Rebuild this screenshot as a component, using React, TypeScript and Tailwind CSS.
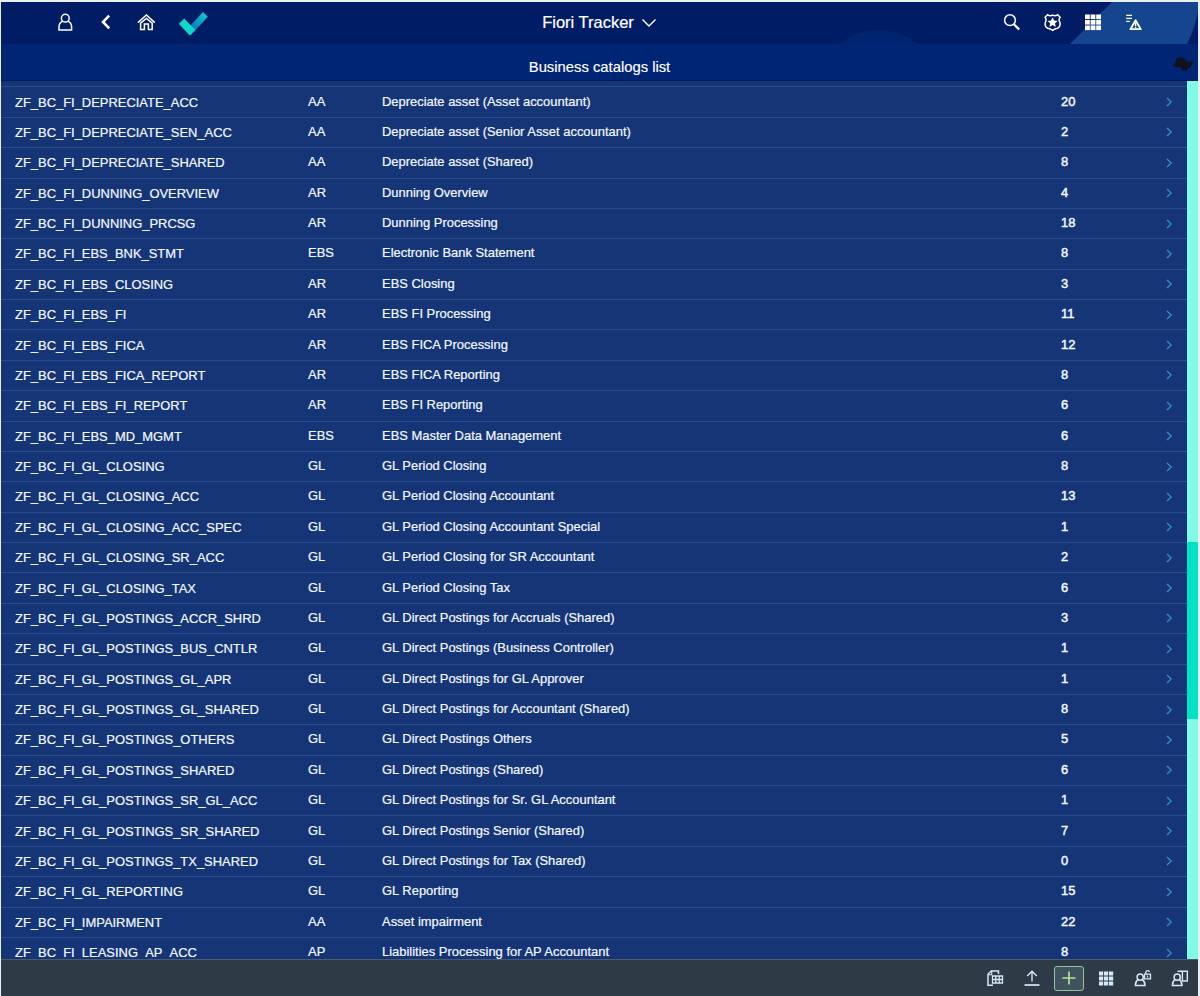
import type { ReactNode } from "react";

type Catalog = [name: string, area: string, description: string, apps: number];

const CATALOGS: Catalog[] = [
  ["ZF_BC_FI_DEPRECIATE_ACC", "AA", "Depreciate asset (Asset accountant)", 20],
  ["ZF_BC_FI_DEPRECIATE_SEN_ACC", "AA", "Depreciate asset (Senior Asset accountant)", 2],
  ["ZF_BC_FI_DEPRECIATE_SHARED", "AA", "Depreciate asset (Shared)", 8],
  ["ZF_BC_FI_DUNNING_OVERVIEW", "AR", "Dunning Overview", 4],
  ["ZF_BC_FI_DUNNING_PRCSG", "AR", "Dunning Processing", 18],
  ["ZF_BC_FI_EBS_BNK_STMT", "EBS", "Electronic Bank Statement", 8],
  ["ZF_BC_FI_EBS_CLOSING", "AR", "EBS Closing", 3],
  ["ZF_BC_FI_EBS_FI", "AR", "EBS FI Processing", 11],
  ["ZF_BC_FI_EBS_FICA", "AR", "EBS FICA Processing", 12],
  ["ZF_BC_FI_EBS_FICA_REPORT", "AR", "EBS FICA Reporting", 8],
  ["ZF_BC_FI_EBS_FI_REPORT", "AR", "EBS FI Reporting", 6],
  ["ZF_BC_FI_EBS_MD_MGMT", "EBS", "EBS Master Data Management", 6],
  ["ZF_BC_FI_GL_CLOSING", "GL", "GL Period Closing", 8],
  ["ZF_BC_FI_GL_CLOSING_ACC", "GL", "GL Period Closing Accountant", 13],
  ["ZF_BC_FI_GL_CLOSING_ACC_SPEC", "GL", "GL Period Closing Accountant Special", 1],
  ["ZF_BC_FI_GL_CLOSING_SR_ACC", "GL", "GL Period Closing for SR Accountant", 2],
  ["ZF_BC_FI_GL_CLOSING_TAX", "GL", "GL Period Closing Tax", 6],
  ["ZF_BC_FI_GL_POSTINGS_ACCR_SHRD", "GL", "GL Direct Postings for Accruals (Shared)", 3],
  ["ZF_BC_FI_GL_POSTINGS_BUS_CNTLR", "GL", "GL Direct Postings (Business Controller)", 1],
  ["ZF_BC_FI_GL_POSTINGS_GL_APR", "GL", "GL Direct Postings for GL Approver", 1],
  ["ZF_BC_FI_GL_POSTINGS_GL_SHARED", "GL", "GL Direct Postings for Accountant (Shared)", 8],
  ["ZF_BC_FI_GL_POSTINGS_OTHERS", "GL", "GL Direct Postings Others", 5],
  ["ZF_BC_FI_GL_POSTINGS_SHARED", "GL", "GL Direct Postings (Shared)", 6],
  ["ZF_BC_FI_GL_POSTINGS_SR_GL_ACC", "GL", "GL Direct Postings for Sr. GL Accountant", 1],
  ["ZF_BC_FI_GL_POSTINGS_SR_SHARED", "GL", "GL Direct Postings Senior (Shared)", 7],
  ["ZF_BC_FI_GL_POSTINGS_TX_SHARED", "GL", "GL Direct Postings for Tax (Shared)", 0],
  ["ZF_BC_FI_GL_REPORTING", "GL", "GL Reporting", 15],
  ["ZF_BC_FI_IMPAIRMENT", "AA", "Asset impairment", 22],
  ["ZF_BC_FI_LEASING_AP_ACC", "AP", "Liabilities Processing for AP Accountant", 8],
];

function Icon({ children, className = "w-5 h-5" }: { children: ReactNode; className?: string }) {
  return (
    <svg
      viewBox="0 0 20 20"
      className={`flex-none ${className}`}
      fill="none"
      stroke="currentColor"
      strokeWidth="1.5"
    >
      {children}
    </svg>
  );
}

function GridIcon() {
  return (
    <Icon>
      <g fill="currentColor" stroke="none">
        {[2.5, 8, 13.5].map((y) =>
          [2, 7.6, 13.2].map((x) => <rect key={`${x}-${y}`} x={x} y={y} width="4.8" height="4.6" />)
        )}
      </g>
    </Icon>
  );
}

function IconButton({ label, children }: { label: string; children: ReactNode }) {
  return (
    <button aria-label={label} className="flex-none flex items-center justify-center">
      {children}
    </button>
  );
}

function ShellHeader() {
  return (
    <header className="relative flex-none h-[42px] bg-[#001c64] text-white overflow-hidden">
      {/* Background artwork */}
      <svg viewBox="0 0 1197 42" className="absolute inset-0 w-full h-full">
        <path d="M838 42Q856 28 878 28Q900 28 917 42Z" fill="#00246f" />
        <path d="M1111 0H1197V10Q1193 29 1186 42H1069Z" fill="#14458e" />
      </svg>

      <div className="relative h-full grid grid-cols-3 items-center pb-0.5">
        <div className="flex items-center pl-[54px]">
          <IconButton label="User">
            <Icon>
              <circle cx="10.3" cy="6.2" r="3.9" />
              <path d="M7.6 9.2Q4 11 4 15V17.9H16.6V15Q16.6 11 13 9.2" />
            </Icon>
          </IconButton>
          <div className="ml-5">
            <IconButton label="Back">
              <Icon>
                <path d="M14.2 3.6L8 10L14.2 16.4" strokeWidth="2.6" />
              </Icon>
            </IconButton>
          </div>
          <div className="ml-[21px]">
            <IconButton label="Home">
              <Icon>
                <path d="M2 10.6L10.4 3L18.8 10.6" />
                <path d="M4.6 11.2L10.4 6.4L16.2 11.2V17.4H12.4V12H8.4V17.4H4.6Z" />
              </Icon>
            </IconButton>
          </div>
          {/* Brand tick */}
          <svg viewBox="0 0 32 28" className="ml-[22px] mt-[3px] w-8 h-7 flex-none">
            <defs>
              <linearGradient id="tick" x1="0" y1="1" x2="1" y2="0">
                <stop offset="0" stopColor="#087fba" />
                <stop offset="0.4" stopColor="#0a86bd" />
                <stop offset="1" stopColor="#12d5cc" />
              </linearGradient>
            </defs>
            <path d="M9.5 18.5L25 2L29.8 6.7L13 25Z" fill="url(#tick)" />
            <path d="M0.8 13.8L6.2 8.6L17.4 20L11.8 25.6Z" fill="#0fd8cb" />
          </svg>
        </div>

        <button className="flex items-center justify-center gap-[7px] text-[16.5px] leading-5 [-webkit-text-stroke:0.2px]">
          <span>Fiori Tracker</span>
          <svg viewBox="0 0 16 10" className="w-4 h-2.5 mt-0.5" fill="none" stroke="currentColor" strokeWidth="1.4">
            <path d="M1.5 1.5L8 8L14.5 1.5" />
          </svg>
        </button>

        <div className="flex items-center justify-end gap-[21px] pr-[54px]">
          <IconButton label="Search">
            <Icon>
              <circle cx="9" cy="8.2" r="5.4" />
              <path d="M12.9 12.2L18.2 17.6" strokeWidth="2.2" />
            </Icon>
          </IconButton>
          <IconButton label="Authorizations">
            <Icon>
              <g transform="translate(0.6 0)">
                <path d="M5 2.8Q7.5 4.3 10 3.1Q12.5 4.3 15 2.8L17.5 5.2Q15.8 7.2 17 9.8Q18.6 14.3 15 16.3Q12 16.9 10 18.3Q8 16.9 5 16.3Q1.4 14.3 3 9.8Q4.2 7.2 2.5 5.2Z" />
                <path d="M10 5.2L11.5 8.5L15.1 8.9L12.4 11.3L13.2 14.9L10 13.1L6.8 14.9L7.6 11.3L4.9 8.9L8.5 8.5Z" fill="currentColor" stroke="none" />
              </g>
            </Icon>
          </IconButton>
          <IconButton label="Apps">
            <GridIcon />
          </IconButton>
          <IconButton label="Alerts">
            <Icon>
              <path d="M2.2 3.3H8M2.2 6.3H8M2.2 9.3H5.8" strokeWidth="1.2" />
              <path d="M11.6 8.2L16.8 17.2H6.4Z" strokeLinejoin="round" strokeWidth="1.8" />
              <path d="M11.6 10.5V14.2M11.6 14.9V16.2" strokeWidth="1.5" />
            </Icon>
          </IconButton>
        </div>
      </div>
    </header>
  );
}

function PageTitle() {
  return (
    <div className="relative flex-none h-[37px] bg-[#002575] border-b border-[#001750] flex items-center justify-center pt-2.5">
      <h1 className="text-[14.8px] leading-5 text-white [-webkit-text-stroke:0.15px]">Business catalogs list</h1>
      {/* Floating helper mark */}
      <svg viewBox="0 0 22 16" className="absolute right-[4px] top-[12px] w-[22px] h-4" fill="#10131f">
        <path d="M1 10.5L4.5 3Q6 1 9.5 1.3L12.5 2.5L15.5 6L21.3 5.2L18 12.5L16.5 11.5L15 14.5Q12.5 16 10 14L8 10.5L6.5 12Z" />
      </svg>
    </div>
  );
}

function CatalogRow({ catalog }: { catalog: Catalog }) {
  const [name, area, description, apps] = catalog;

  return (
    <li className="flex-none h-[30.375px] border-b border-[#294c8d] flex items-center pl-3.5 pr-[13px] text-[12.94px] leading-4 text-[#f4f8ff] whitespace-nowrap [-webkit-text-stroke:0.2px]">
      <span className="w-[293px] pt-px">{name}</span>
      <span className="w-[74px] pb-px">{area}</span>
      <span className="w-[679px] pb-px">{description}</span>
      <span className="flex-1 pb-px [-webkit-text-stroke:0.45px]">{apps}</span>
      <svg viewBox="0 0 10 10" className="w-2.5 h-2.5" fill="none" stroke="#3390cd" strokeWidth="1.3">
        <path d="M3 1L7.2 5L3 9" />
      </svg>
    </li>
  );
}

function Toolbar() {
  return (
    <footer className="flex-none h-[37px] bg-[#2e3a46] border-t border-[#4b5c70] text-[#d5e8f7] flex items-center justify-end gap-[17px] pr-2">
      <IconButton label="Export to spreadsheet">
        <Icon>
          <path d="M8 17.2H3V6.2L6.2 3H13.5V6" />
          <path d="M3 6.7H6.7V3" strokeWidth="1.1" />
          <path d="M7.5 8H17.5V15H7.5ZM7.5 11.5H17.5M10.8 8V15M14.2 8V15" strokeWidth="1.3" />
        </Icon>
      </IconButton>
      <IconButton label="Upload">
        <Icon>
          <path d="M10 13.5V3.2M5.2 8L10 3.2L14.8 8" strokeWidth="1.4" />
          <path d="M2.5 17H17.5" strokeWidth="1.7" />
        </Icon>
      </IconButton>
      <button
        aria-label="Add"
        className="-mx-[5px] w-[30px] h-[25px] flex-none flex items-center justify-center rounded-[3px] border border-[#8fc6a0] bg-[#405160] text-[#b5e68c]"
      >
        <Icon>
          <path d="M10 3.5V16.5M3.5 10H16.5" strokeWidth="1.7" />
        </Icon>
      </button>
      <IconButton label="Apps">
        <Icon>
          <g fill="currentColor" stroke="none">
            {[3.5, 8.5, 13.5].map((y) =>
              [3, 8, 13].map((x) => <rect key={`${x}-${y}`} x={x} y={y} width="4.2" height="4" />)
            )}
          </g>
        </Icon>
      </IconButton>
      <IconButton label="Unlock user">
        <Icon>
          <circle cx="7.2" cy="9.2" r="3.1" />
          <path d="M5 11.6Q2.4 13.4 2.4 17.4H12Q12 13.4 9.4 11.6" />
          <path d="M11.5 6.2H17.5V10.8H11.5Z" strokeWidth="1.3" />
          <path d="M14.5 7.5V9.5" strokeWidth="1.3" />
          <path d="M12.8 6.2V4.3Q13 2.6 14.7 2.6Q16.2 2.6 16.5 4" strokeWidth="1.3" />
        </Icon>
      </IconButton>
      <IconButton label="User assignments">
        <Icon>
          <circle cx="7.2" cy="9.2" r="3.1" />
          <path d="M5 11.6Q2.4 13.4 2.4 17.4H12Q12 13.4 9.4 11.6" />
          <path d="M7.5 3.2H17.3V13H12.4V3.2" strokeWidth="1.4" />
        </Icon>
      </IconButton>
    </footer>
  );
}

export default function App() {
  return (
    <div className="w-[1200px] h-[996px] bg-[#e8f0f4] pt-0.5 pl-px pr-0.5 font-['Liberation_Sans',Arial,sans-serif]">
      <div className="h-full flex flex-col overflow-hidden">
        <ShellHeader />
        <PageTitle />
        <main className="flex-1 min-h-0 flex bg-[#153577]">
          <ul className="flex-1 min-w-0 h-full overflow-hidden flex flex-col">
            <li className="flex-none h-[6.4px] border-b border-[#294c8d]" />
            {CATALOGS.map((catalog) => (
              <CatalogRow key={catalog[0]} catalog={catalog} />
            ))}
          </ul>
          {/* Scrollbar */}
          <div className="flex-none w-[11px] bg-[#82fbe6] pt-[461px]">
            <div className="h-[177px] bg-[#00e4c5]" />
          </div>
        </main>
        <Toolbar />
      </div>
    </div>
  );
}
